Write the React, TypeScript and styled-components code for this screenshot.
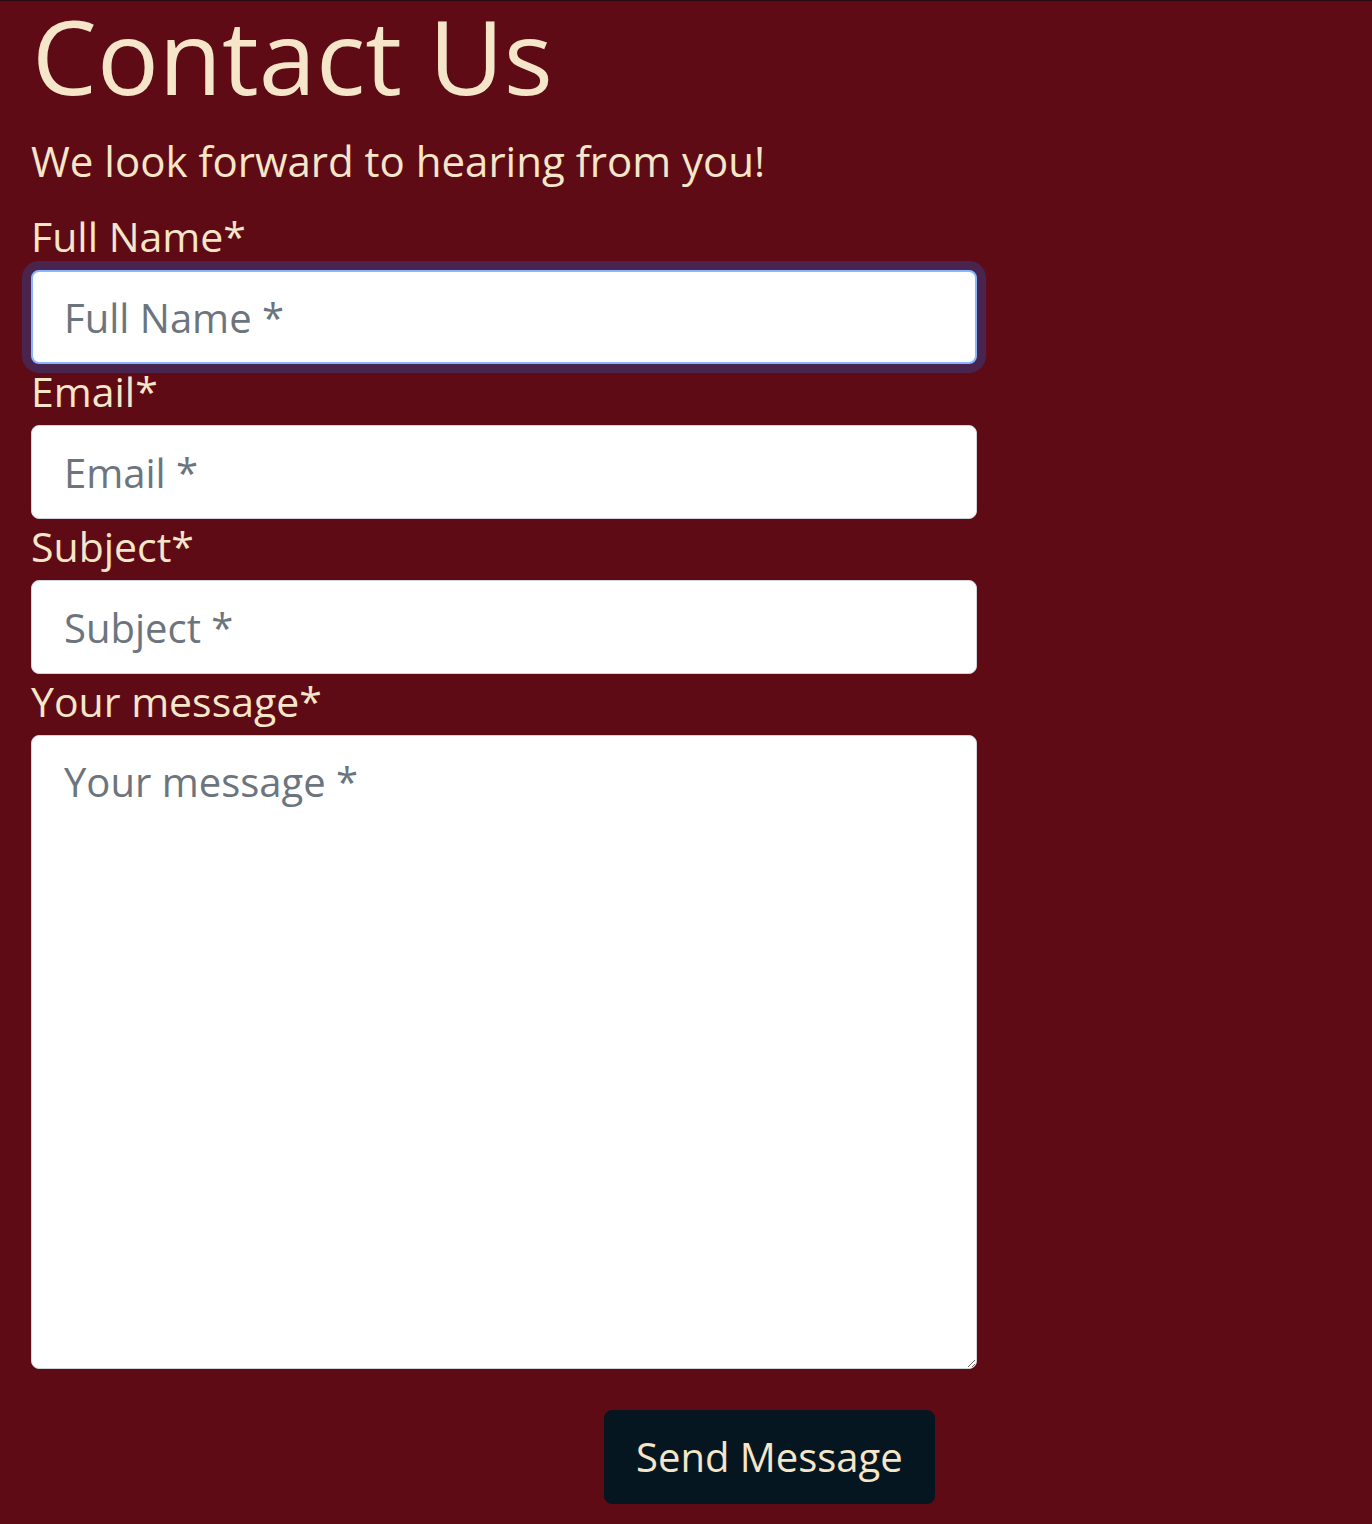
import { createGlobalStyle } from 'styled-components'
import styled from 'styled-components'

const GlobalStyle = createGlobalStyle`
    html, body {
        margin: 0;
        padding: 0;
        background: #5e0b15;
    }
    * {
        box-sizing: border-box;
    }
`

const Page = styled.main`
    min-height: 100vh;
    background: #5e0b15;
    border-top: 1px solid #2b0a14;
    padding: 0 31px 21px;
    font-family: "Open Sans", "Noto Sans", sans-serif;
    color: #f5e6ca;
`

const Title = styled.h1`
    margin: -8px 0 0 1px;
    font-size: 103px;
    font-weight: 400;
    line-height: 124px;
`

const Lead = styled.p`
    margin: 14px 0 18px;
    font-size: 42px;
    line-height: 60px;
`

const Form = styled.form`
    width: 946px;
    display: flex;
    flex-direction: column;
`

const Label = styled.label`
    display: block;
    height: 61px;
    font-size: 41px;
    line-height: 55px;
`

const fieldBase = `
    display: block;
    width: 100%;
    font-family: "Open Sans", "Noto Sans", sans-serif;
    font-size: 40px;
    line-height: 60px;
    color: #212529;
    background: #ffffff;
    border: 1px solid #ced4da;
    border-radius: 8px;
    padding: 16px 32px;
    outline: none;
    &::placeholder {
        color: #6c757d;
        opacity: 1;
    }
    &:focus {
        border-color: #86b7fe;
        box-shadow: 0 0 0 9px rgba(13, 110, 253, 0.25);
    }
`

const Input = styled.input<{ $active?: boolean }>`
    ${ fieldBase }
    height: 94px;
    ${ props => props.$active && `
        border: 2px solid #86b7fe;
        padding-left: 31px;
        box-shadow: 0 0 0 9px rgba(13, 110, 253, 0.25);
    ` }
`

const TextArea = styled.textarea`
    ${ fieldBase }
    height: 634px;
    resize: vertical;
`

const Actions = styled.div`
    display: flex;
    padding-left: 573px;
    margin-top: 41px;
`

const SendButton = styled.button`
    height: 94px;
    padding: 0 31px;
    border: 1px solid #061621;
    border-radius: 8px;
    background: #061621;
    color: #f5e6ca;
    font-family: "Open Sans", "Noto Sans", sans-serif;
    font-size: 40px;
    line-height: 60px;
    cursor: pointer;
`

const fields = [
    { id: 'email', label: 'Email*', placeholder: 'Email *', type: 'email' },
    { id: 'subject', label: 'Subject*', placeholder: 'Subject *', type: 'text' },
]

export default function App() {
    return (
        <>
            <GlobalStyle />
            <Page>
                <Title>Contact Us</Title>
                <Lead>We look forward to hearing from you!</Lead>
                <Form onSubmit={ e => e.preventDefault() }>
                    <Label htmlFor="name">Full Name*</Label>
                    <Input id="name" type="text" placeholder="Full Name *" $active autoFocus />
                    { fields.map( f => (
                        <div key={ f.id }>
                            <Label htmlFor={ f.id }>{ f.label }</Label>
                            <Input id={ f.id } type={ f.type } placeholder={ f.placeholder } />
                        </div>
                    ) ) }
                    <Label htmlFor="message">Your message*</Label>
                    <TextArea id="message" placeholder="Your message *" />
                    <Actions>
                        <SendButton type="submit">Send Message</SendButton>
                    </Actions>
                </Form>
            </Page>
        </>
    )
}
